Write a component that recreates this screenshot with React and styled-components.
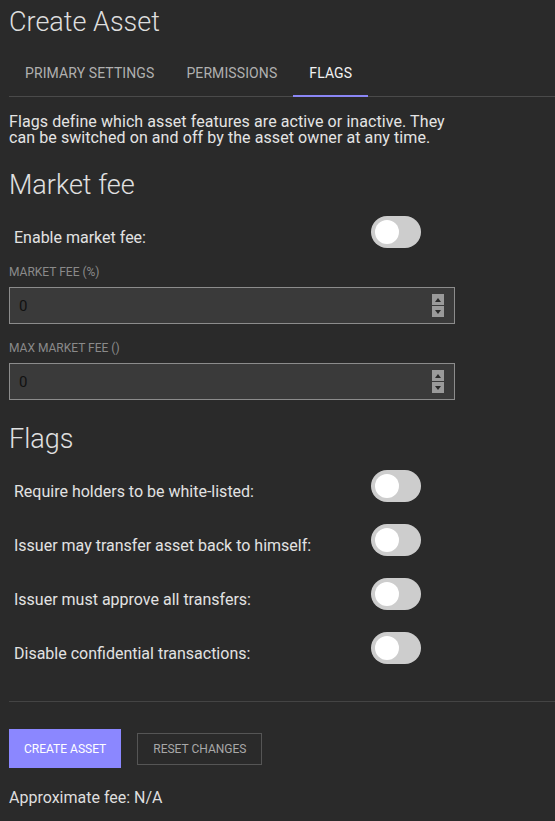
import styled, { createGlobalStyle } from "styled-components";

const Global = createGlobalStyle`
  html, body {
    margin: 0;
    background: #2a2a2a;
  }
  body {
    font-family: Roboto, "Liberation Sans", sans-serif;
    color: #dcdcdc;
  }
`;

const flags = [
  "Require holders to be white-listed:",
  "Issuer may transfer asset back to himself:",
  "Issuer must approve all transfers:",
  "Disable confidential transactions:",
];

export default function App() {
  return (
    <>
      <Global />
      <Page>
        <Title>Create Asset</Title>
        <TabBar>
          <Tab>Primary settings</Tab>
          <Tab>Permissions</Tab>
          <Tab active>Flags</Tab>
        </TabBar>
        <Content>
          <Intro>
            Flags define which asset features are active or inactive. They can be switched on and off by the asset owner at any time.
          </Intro>

          <Heading>Market fee</Heading>
          <SwitchRow>
            <RowLabel>Enable market fee:</RowLabel>
            <Toggle />
          </SwitchRow>

          <FieldLabel>Market fee (%)</FieldLabel>
          <NumberField value="0" />
          <FieldLabel>Max market fee ()</FieldLabel>
          <NumberField value="0" />

          <Heading>Flags</Heading>
          <FlagList>
            {flags.map((f) => (
              <SwitchRow key={f}>
                <RowLabel>{f}</RowLabel>
                <Toggle />
              </SwitchRow>
            ))}
          </FlagList>
        </Content>
        <Divider />
        <Actions>
          <PrimaryButton>Create asset</PrimaryButton>
          <OutlineButton>Reset changes</OutlineButton>
        </Actions>
        <Fee>Approximate fee: N/A</Fee>
      </Page>
    </>
  );
}

function Toggle() {
  return (
    <Track>
      <Knob />
    </Track>
  );
}

function NumberField({ value }) {
  return (
    <InputBox>
      <Input defaultValue={value} />
      <Spinner>
        <SpinBtn>
          <svg width="6" height="4" viewBox="0 0 6 4"><path d="M3 0 L6 4 L0 4 Z" fill="#2a2a2a" /></svg>
        </SpinBtn>
        <SpinBtn>
          <svg width="6" height="4" viewBox="0 0 6 4"><path d="M0 0 L6 0 L3 4 Z" fill="#2a2a2a" /></svg>
        </SpinBtn>
      </Spinner>
    </InputBox>
  );
}

const Page = styled.div`
  padding: 0 0 0 9px;
  width: 546px;
`;

const Title = styled.h1`
  margin: 0;
  font-size: 27px;
  font-weight: 300;
  line-height: 44px;
  color: #dedede;
`;

const TabBar = styled.div`
  display: flex;
  margin-top: 6px;
  border-bottom: 1px solid #4a4a4a;
`;

const Tab = styled.div`
  padding: 0 16px;
  display: flex;
  align-items: center;
  box-sizing: border-box;
  margin-bottom: -1px;
  height: 47px;
  border-bottom: 2px solid ${(p) => (p.active ? "#8a86f5" : "transparent")};
  font-size: 14px;
  letter-spacing: 0.1px;
  text-transform: uppercase;
  color: ${(p) => (p.active ? "#f2f2f2" : "#b0b0b0")};
`;

const Content = styled.div`
  width: 446px;
`;

const Intro = styled.p`
  margin: 17px 0 0;
  font-size: 16px;
  line-height: 16px;
  letter-spacing: 0.08px;
  color: #e4e4e4;
`;

const Heading = styled.h2`
  margin: 24px 0 0;
  font-size: 27px;
  font-weight: 300;
  line-height: 30px;
  color: #e0e0e0;
`;

const SwitchRow = styled.div`
  display: grid;
  grid-template-columns: 362px 50px;
  align-items: center;
  margin-top: 16px;
`;

const RowLabel = styled.span`
  padding: 12px 0 0 5px;
  font-size: 16px;
  line-height: 20px;
  color: #e2e2e2;
`;

const FlagList = styled.div`
  margin-top: 16px;
  display: flex;
  flex-direction: column;
  gap: 22px;
  & > ${SwitchRow} {
    margin-top: 0;
  }
`;

const Track = styled.div`
  position: relative;
  width: 50px;
  height: 32px;
  border-radius: 16px;
  background: #cdcdcd;
`;

const Knob = styled.div`
  position: absolute;
  left: 4px;
  top: 4px;
  width: 24px;
  height: 24px;
  border-radius: 50%;
  background: #ffffff;
`;

const FieldLabel = styled.div`
  margin-top: 16px;
  font-size: 12px;
  line-height: 16px;
  text-transform: uppercase;
  color: #8a8a8a;
`;

const InputBox = styled.div`
  display: flex;
  align-items: center;
  margin-top: 7px;
  height: 37px;
  box-sizing: border-box;
  border: 1px solid #8c8c8c;
  background: #3a3a3a;
  padding: 0 10px 0 9px;
`;

const Input = styled.input`
  flex: 1;
  min-width: 0;
  border: none;
  outline: none;
  background: transparent;
  font-family: Roboto, "Liberation Sans", sans-serif;
  font-size: 15px;
  color: #111111;
  -webkit-text-fill-color: #111111;
  padding: 0;
`;

const Spinner = styled.div`
  display: flex;
  flex-direction: column;
  gap: 1px;
`;

const SpinBtn = styled.div`
  width: 12px;
  height: 11px;
  background: #9a9a9a;
  display: flex;
  align-items: center;
  justify-content: center;
`;

const Divider = styled.div`
  margin-top: 37px;
  border-top: 1px solid #444;
`;

const Actions = styled.div`
  display: flex;
  align-items: center;
  gap: 16px;
  margin-top: 27px;
`;

const PrimaryButton = styled.button`
  height: 39px;
  padding: 0 15px;
  border: none;
  background: #8b87ff;
  color: #ffffff;
  font-family: Roboto, "Liberation Sans", sans-serif;
  font-size: 12px;
  text-transform: uppercase;
`;

const OutlineButton = styled.button`
  height: 32px;
  padding: 0 15px;
  border: 1px solid #555;
  background: transparent;
  color: #a8a8a8;
  font-family: Roboto, "Liberation Sans", sans-serif;
  font-size: 12px;
  text-transform: uppercase;
`;

const Fee = styled.div`
  margin-top: 20px;
  font-size: 16px;
  line-height: 20px;
  color: #dedede;
`;
